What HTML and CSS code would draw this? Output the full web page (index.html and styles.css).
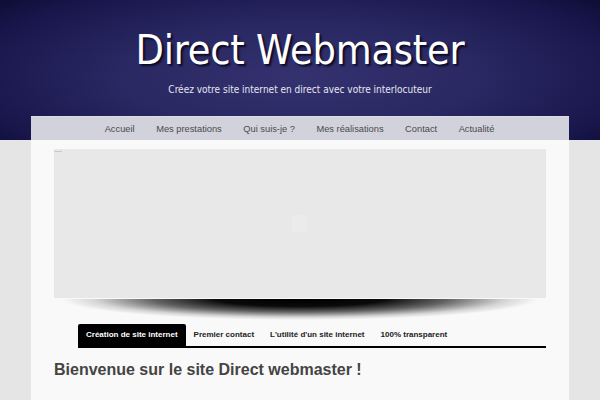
FILE: index.html
```html
<!DOCTYPE html>
<html lang="fr">
<head>
<meta charset="utf-8">
<title>Direct Webmaster</title>
<link rel="stylesheet" href="styles.css">
</head>
<body>
<header class="site-header">
  <h1 class="site-title">Direct Webmaster</h1>
  <p class="site-desc">Créez votre site internet en direct avec votre interlocuteur</p>
  <nav class="main-nav">
    <a href="#">Accueil</a>
    <a href="#">Mes prestations</a>
    <a href="#">Qui suis-je ?</a>
    <a href="#">Mes réalisations</a>
    <a href="#">Contact</a>
    <a href="#">Actualité</a>
  </nav>
</header>
<main class="wrap">
  <div class="slider">
    <span class="slider-tick"></span>
    <span class="slider-icon"></span>
  </div>
  <div class="slider-shadow"></div>
  <ul class="tabs">
    <li class="tab active">Création de site internet</li>
    <li class="tab">Premier contact</li>
    <li class="tab">L'utilité d'un site internet</li>
    <li class="tab">100% transparent</li>
  </ul>
  <h2 class="welcome">Bienvenue sur le site Direct webmaster !</h2>
</main>
</body>
</html>
```
FILE: styles.css
```css
html, body {
  margin: 0;
  padding: 0;
}
body {
  background: #e5e5e5;
  font-family: "Liberation Sans", Arial, sans-serif;
  height: 400px;
  overflow: hidden;
}
.site-header {
  height: 140px;
  background: radial-gradient(ellipse 75% 95% at 50% 55%, #34326f 0%, #2a2862 40%, #17154a 75%, #070620 100%);
  display: flex;
  flex-direction: column;
  align-items: center;
}
.site-title {
  margin: 26px 0 0;
  font-family: "DejaVu Sans Condensed", "DejaVu Sans", sans-serif;
  font-weight: normal;
  font-size: 41px;
  line-height: 48px;
  color: #fff;
  letter-spacing: -0.2px;
  text-shadow: 2px 2px 2px #0b0a24;
}
.site-desc {
  margin: 9px 0 0;
  font-family: "DejaVu Sans Condensed", "DejaVu Sans", sans-serif;
  font-size: 10px;
  line-height: 13px;
  color: #e6e6f2;
}
.main-nav {
  margin-top: auto;
  width: 538px;
  height: 24px;
  box-sizing: border-box;
  background: #d2d2dc;
  border-top: 1px solid #dcdce4;
  display: flex;
  justify-content: center;
  align-items: center;
  gap: 21.5px;
  padding-right: 1px;
}
.main-nav a {
  font-size: 9.3px;
  color: #4a4a4a;
  text-decoration: none;
}
.wrap {
  width: 538px;
  margin: 0 auto;
  background: #f9f9f9;
  box-sizing: border-box;
  padding: 9px 23px 30px;
  height: 260px;
}
.slider {
  height: 149px;
  background: #e8e8e8;
  position: relative;
}
.slider-tick {
  position: absolute;
  left: 0;
  top: 2px;
  width: 8px;
  height: 1px;
  background: #c8c8c8;
}
.slider-icon {
  position: absolute;
  left: 238px;
  top: 66px;
  width: 15px;
  height: 17px;
  border-radius: 2px;
  background: #ebebeb;
}
.slider-shadow {
  height: 21px;
  margin: 1px 8px 0;
  background: radial-gradient(ellipse 50% 100% at 50% 0%, #000 0%, #0a0a0a 35%, rgba(0,0,0,0.6) 62%, rgba(0,0,0,0.15) 86%, rgba(0,0,0,0) 100%);
}
.tabs {
  list-style: none;
  margin: 4px 0 0 24px;
  padding: 0;
  display: flex;
  border-bottom: 2px solid #000;
  height: 22px;
}
.tab {
  font-size: 8px;
  font-weight: bold;
  color: #222;
  padding: 0 8px;
  margin-right: 0;
  line-height: 22px;
}
.tab.active {
  background: #000;
  color: #fff;
  border-radius: 2px 2px 0 0;
  margin-right: 0;
}
.welcome {
  margin: 12px 0 0;
  font-size: 16px;
  font-weight: bold;
  color: #444;
  line-height: 20px;
}
```
